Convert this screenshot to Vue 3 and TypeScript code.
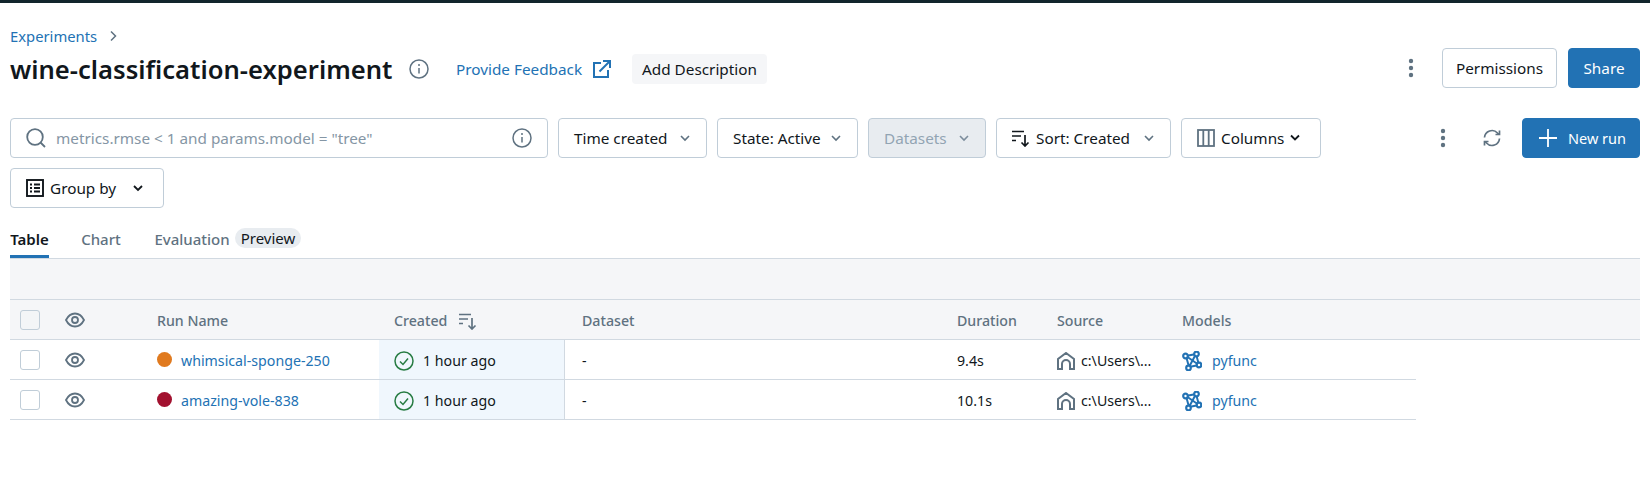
<script setup lang="ts">
interface Run {
  name: string
  color: string
  duration: string
}

const runs: Run[] = [
  { name: 'whimsical-sponge-250', color: '#e07a1f', duration: '9.4s' },
  { name: 'amazing-vole-838', color: '#a2112f', duration: '10.1s' },
]
</script>

<template>
  <div class="page">
    <div class="breadcrumb">
      <a class="link">Experiments</a>
      <svg class="crumb-chevron" width="16" height="16" viewBox="0 0 16 16" fill="none" stroke="#5f7281" stroke-width="1.5"><path d="M6 3.5 10.5 8 6 12.5" /></svg>
    </div>

    <header class="title-row">
      <h1 class="title">wine-classification-experiment</h1>
      <svg class="title-info" width="20" height="20" viewBox="0 0 20 20" fill="none" stroke="#5f7281" stroke-width="1.5"><circle cx="10" cy="10" r="9" /><path d="M10 9v5.5" /><circle cx="10" cy="6" r="1" fill="#5f7281" stroke="none" /></svg>
      <a class="link feedback">Provide Feedback</a>
      <svg class="external" width="18" height="18" viewBox="0 0 18 18" fill="none" stroke="#2272b4" stroke-width="2"><path d="M8 3H1v14h14v-7" /><path d="M6.500 11.500 16 2" /><path d="M10 1h7v7" /></svg>
      <span class="chip">Add Description</span>
      <div class="title-actions">
        <svg class="kebab" width="6" height="20" viewBox="0 0 6 20" fill="#5f7281"><circle cx="3" cy="3" r="2.200" /><circle cx="3" cy="10" r="2.200" /><circle cx="3" cy="17" r="2.200" /></svg>
        <button class="btn permissions">Permissions</button>
        <button class="btn primary share">Share</button>
      </div>
    </header>

    <div class="toolbar">
      <div class="search">
        <svg width="20" height="20" viewBox="0 0 20 20" fill="none" stroke="#5f7281" stroke-width="1.800"><circle cx="9" cy="9" r="7.800" /><path d="m14.500 14.500 4.500 4.500" /></svg>
        <span class="placeholder">metrics.rmse &lt; 1 and params.model = "tree"</span>
        <svg class="search-info" width="20" height="20" viewBox="0 0 20 20" fill="none" stroke="#5f7281" stroke-width="1.500"><circle cx="10" cy="10" r="9" /><path d="M10 9v5.500" /><circle cx="10" cy="6" r="1" fill="#5f7281" stroke="none" /></svg>
      </div>
      <button class="btn time">Time created
        <svg class="chevron" width="12" height="12" viewBox="0 0 12 12" fill="none" stroke="#5f7281" stroke-width="1.600"><path d="M2 4l4 4 4-4" /></svg>
      </button>
      <button class="btn state">State: Active
        <svg class="chevron" width="12" height="12" viewBox="0 0 12 12" fill="none" stroke="#5f7281" stroke-width="1.600"><path d="M2 4l4 4 4-4" /></svg>
      </button>
      <button class="btn datasets">Datasets
        <svg class="chevron" width="12" height="12" viewBox="0 0 12 12" fill="none" stroke="#7c8d9c" stroke-width="1.600"><path d="M2 4l4 4 4-4" /></svg>
      </button>
      <button class="btn sort">
        <svg width="18" height="18" viewBox="0 0 18 18" fill="none" stroke="#11171c" stroke-width="1.700"><path d="M0 2.500h12M0 7h9M0 11.500h4" /><path d="M13 6v11M9.500 13.500 13 17l3.500-3.500" /></svg>
        Sort: Created
        <svg class="chevron" width="12" height="12" viewBox="0 0 12 12" fill="none" stroke="#5f7281" stroke-width="1.600"><path d="M2 4l4 4 4-4" /></svg>
      </button>
      <button class="btn columns">
        <svg width="18" height="18" viewBox="0 0 18 18" fill="none" stroke="#5f7281" stroke-width="1.800"><rect x="1" y="1" width="16" height="16" /><path d="M6.300 1v16M11.700 1v16" /></svg>
        Columns
        <svg class="chevron-tight" width="12" height="12" viewBox="0 0 12 12" fill="none" stroke="#11171c" stroke-width="1.800"><path d="M2 3.500 6 7.500 10 3.500" /></svg>
      </button>
      <div class="toolbar-end">
        <svg class="kebab" width="6" height="20" viewBox="0 0 6 20" fill="#5f7281"><circle cx="3" cy="3" r="2.200" /><circle cx="3" cy="10" r="2.200" /><circle cx="3" cy="17" r="2.200" /></svg>
        <svg class="refresh" width="18" height="18" viewBox="0 0 18 18" fill="none" stroke="#5f7281" stroke-width="1.700"><path d="M1.500 8.500A7.500 7.500 0 0 1 14.500 4L16 5.500" /><path d="M16.500 1.500v4h-4" /><path d="M16.500 9.500A7.500 7.500 0 0 1 3.500 14L2 12.500" /><path d="M1.500 16.500v-4h4" /></svg>
        <button class="btn primary new-run">
          <svg width="18" height="18" viewBox="0 0 18 18" fill="none" stroke="#fff" stroke-width="1.800"><path d="M9 0v18M0 9h18" /></svg>
          New run
        </button>
      </div>
    </div>

    <div class="toolbar second">
      <button class="btn group">
        <svg width="18" height="18" viewBox="0 0 18 18" fill="none" stroke="#11171c" stroke-width="1.900"><rect x="1" y="1" width="16" height="16" /><path d="M4 5.500h2M4 9h2M4 12.500h2M8 5.500h6M8 9h6M8 12.500h6" /></svg>
        Group by
        <svg class="chevron group-chevron" width="12" height="12" viewBox="0 0 12 12" fill="none" stroke="#11171c" stroke-width="1.800"><path d="M2 4l4 4 4-4" /></svg>
      </button>
    </div>

    <nav class="tabs">
      <span class="tab active">Table</span>
      <span class="tab chart">Chart</span>
      <span class="tab evaluation">Evaluation</span>
      <span class="pill">Preview</span>
    </nav>

    <div class="band" />

    <div class="cols head">
      <div class="cell check-cell"><span class="checkbox muted" /></div>
      <div class="cell eye-cell">
        <svg width="20" height="20" viewBox="0 0 20 20" fill="none" stroke="#5f7281" stroke-width="1.800"><path d="M1 10c2-4 5-6.500 9-6.500s7 2.500 9 6.500c-2 4-5 6.500-9 6.500S3 14 1 10z" /><circle cx="10" cy="10" r="3" /></svg>
      </div>
      <div class="cell text">Run Name</div>
      <div class="cell text created-head">Created
        <svg width="18" height="18" viewBox="0 0 18 18" fill="none" stroke="#5f7281" stroke-width="1.700"><path d="M0 2.500h12M0 7h9M0 11.500h4" /><path d="M13 6v11M9.500 13.500 13 17l3.500-3.500" /></svg>
      </div>
      <div class="cell text pad-dataset">Dataset</div>
      <div class="cell text pad">Duration</div>
      <div class="cell text pad">Source</div>
      <div class="cell text pad">Models</div>
    </div>

    <div v-for="run in runs" :key="run.name" class="cols row">
      <div class="cell check-cell"><span class="checkbox" /></div>
      <div class="cell eye-cell">
        <svg width="20" height="20" viewBox="0 0 20 20" fill="none" stroke="#5f7281" stroke-width="1.800"><path d="M1 10c2-4 5-6.500 9-6.500s7 2.500 9 6.500c-2 4-5 6.500-9 6.500S3 14 1 10z" /><circle cx="10" cy="10" r="3" /></svg>
      </div>
      <div class="cell name-cell">
        <span class="dot" :style="{ background: run.color }" />
        <a class="link">{{ run.name }}</a>
      </div>
      <div class="cell text created">
        <svg width="20" height="20" viewBox="0 0 20 20" fill="none" stroke="#277c43" stroke-width="1.500"><circle cx="10" cy="10" r="9" /><path d="m6 10.500 3 3 5-6" /></svg>
        1 hour ago
      </div>
      <div class="cell text pad-dataset">-</div>
      <div class="cell text pad">{{ run.duration }}</div>
      <div class="cell text pad source">
        <svg width="18" height="18" viewBox="0 0 18 18" fill="none" stroke="#5f7281" stroke-width="2"><path d="M1 17V7l8-6 8 6v10h-4v-5a4 4 0 0 0-8 0v5z" /></svg>
        c:\Users\...
      </div>
      <div class="cell text pad models">
        <svg width="20" height="20" viewBox="0 0 20 20" fill="none" stroke="#2272b4" stroke-width="2"><path d="M4 5l10-2M4 5l13 9M4 5l3 11M14 3l3 11M14 3 7 16M17 14 7 16" /><g fill="#fff" stroke-width="2.200"><circle cx="3.500" cy="5" r="2.300" /><circle cx="14.500" cy="3" r="2.300" /><circle cx="17" cy="14" r="2.300" /><circle cx="6.500" cy="17" r="2.300" /></g></svg>
        <a class="link">pyfunc</a>
      </div>
    </div>
  </div>
</template>

<style>
body {
  background: #fff;
}
</style>

<style scoped>
.page {
  border-top: 3px solid #11252c;
  padding: 23px 10px 0;
  box-sizing: border-box;
  height: 493px;
  overflow: hidden;
  font-family: "Noto Sans", "Open Sans", sans-serif;
  font-size: 15.300px;
  color: #11171c;
}
.link {
  color: #2272b4;
}
.breadcrumb {
  display: flex;
  align-items: center;
  gap: 6px;
  height: 20px;
  font-size: 14.800px;
}
.crumb-chevron {
  margin-left: 2px;
}
.title-row {
  display: flex;
  align-items: center;
  height: 40px;
  margin-top: 3px;
}
.title {
  margin: 0;
  width: 381px;
  font-size: 25.600px;
  font-weight: 600;
  white-space: nowrap;
}
.title-info {
  margin-left: 18px;
}
.feedback {
  margin-left: 27px;
  width: 125px;
  white-space: nowrap;
}
.external {
  margin-left: 12px;
}
.chip {
  margin-left: 21px;
  width: 135px;
  height: 30px;
  display: flex;
  align-items: center;
  justify-content: center;
  border-radius: 4px;
  background: #f5f6f8;
}
.title-actions {
  margin-left: auto;
  margin-bottom: 2px;
  display: flex;
  align-items: center;
}
.btn {
  box-sizing: border-box;
  height: 40px;
  display: flex;
  align-items: center;
  padding: 0 0 0 15px;
  gap: 6px;
  border: 1px solid #c0cdd8;
  border-radius: 4px;
  background: #fff;
  font: inherit;
  color: inherit;
  white-space: nowrap;
}
.primary {
  background: #2272b4;
  border-color: #2272b4;
  color: #fff;
}
.permissions {
  width: 115px;
  margin-left: 28px;
  justify-content: center;
  padding: 0;
}
.share {
  width: 72px;
  margin-left: 11px;
  justify-content: center;
  padding: 0;
}
.toolbar {
  display: flex;
  align-items: center;
  gap: 10px;
  margin-top: 29px;
}
.second {
  margin-top: 10px;
}
.search {
  box-sizing: border-box;
  width: 538px;
  height: 40px;
  display: flex;
  align-items: center;
  padding: 0 15px;
  gap: 10px;
  border: 1px solid #c0cdd8;
  border-radius: 4px;
}
.placeholder {
  color: #8596a5;
  white-space: nowrap;
}
.search-info {
  margin-left: auto;
}
.chevron {
  margin-left: auto;
  margin-right: 15px;
}
.group-chevron {
  margin-right: 19px;
}
.chevron-tight {
  margin-left: -1px;
}
.time {
  width: 149px;
}
.state {
  width: 141px;
}
.datasets {
  width: 118px;
  background: #e8ecf0;
  color: #92a4b3;
}
.sort {
  width: 175px;
}
.columns {
  width: 140px;
}
.group {
  width: 154px;
}
.toolbar-end {
  margin-left: auto;
  display: flex;
  align-items: center;
}
.refresh {
  margin-left: 37px;
}
.new-run {
  width: 118px;
  margin-left: 21px;
  padding-left: 16px;
  gap: 11px;
  font-size: 14.500px;
}
.tabs {
  height: 50px;
  display: flex;
  align-items: flex-end;
  border-bottom: 1px solid #d1d9e1;
  font-size: 15px;
  font-weight: 500;
  color: #5f7281;
}
.tab {
  height: 36px;
  box-sizing: border-box;
  display: flex;
  align-items: flex-start;
  justify-content: center;
  line-height: 35px;
}
.active {
  width: 39px;
  color: #11171c;
  font-weight: 600;
  border-bottom: 3px solid #2272b4;
}
.chart {
  width: 40px;
  margin-left: 32px;
}
.evaluation {
  width: 76px;
  margin-left: 33px;
}
.pill {
  align-self: flex-end;
  margin: 0 0 10px 5px;
  width: 66px;
  height: 20px;
  display: flex;
  align-items: center;
  justify-content: center;
  border-radius: 10px;
  background: #e8ecf0;
  color: #11171c;
  font-weight: 400;
}
.band {
  height: 40px;
  background: #f5f6f8;
  border-bottom: 1px solid #d1d9e1;
}
.cols {
  display: grid;
  grid-template-columns: 45px 102px 222px 186px 377px 100px 125px 249px;
  height: 40px;
  box-sizing: border-box;
  border-bottom: 1px solid #d1d9e1;
  font-size: 14.200px;
}
.head {
  background: #f5f6f8;
  color: #5f7281;
  font-weight: 500;
  width: 1630px;
}
.row {
  width: 1406px;
}
.cell {
  display: flex;
  align-items: center;
  min-width: 0;
  white-space: nowrap;
}
.text {
  padding-top: 2px;
}
.check-cell {
  padding-left: 10px;
}
.eye-cell {
  padding-left: 10px;
}
.checkbox {
  box-sizing: border-box;
  width: 20px;
  height: 20px;
  border: 1.500px solid #c0cdd8;
  border-radius: 3px;
  background: #fff;
}
.muted {
  background: #f3f5f7;
}
.created-head {
  padding-left: 15px;
  gap: 12px;
}
.name-cell {
  gap: 9px;
}
.name-cell .link {
  padding-top: 2px;
}
.dot {
  width: 15px;
  height: 15px;
  border-radius: 50%;
}
.created {
  padding-left: 15px;
  gap: 9px;
  background: #f0f7fd;
  border-right: 1px solid #d1d9e1;
}
.pad-dataset {
  padding-left: 17px;
}
.pad {
  padding-left: 15px;
}
.source {
  gap: 6px;
}
.models {
  gap: 10px;
}
</style>
